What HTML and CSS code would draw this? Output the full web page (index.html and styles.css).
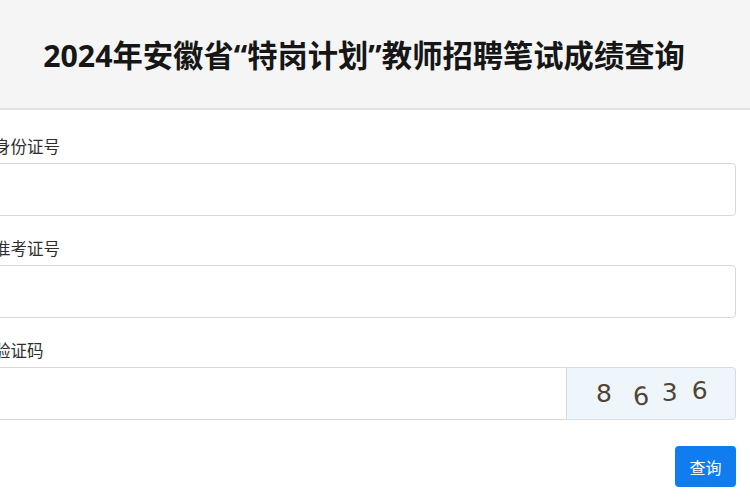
FILE: index.html
```html
<!DOCTYPE html>
<html>
<head>
<meta charset="utf-8">
<link rel="stylesheet" href="styles.css">
</head>
<body>
    <div class="header">
        <h1 class="title">2024年安徽省“特岗计划”教师招聘笔试成绩查询</h1>
    </div>
    <form class="form">
        <div class="field">
            <label class="field-label" for="idcard">身份证号</label>
            <input class="field-input" type="text" id="idcard">
        </div>
        <div class="field">
            <label class="field-label" for="ticket">准考证号</label>
            <input class="field-input" type="text" id="ticket">
        </div>
        <div class="field">
            <label class="field-label" for="code">验证码</label>
            <div class="captcha-row">
                <input class="field-input captcha-input" type="text" id="code">
                <div class="captcha">
                    <span class="digit d1">8</span>
                    <span class="digit d2">6</span>
                    <span class="digit d3">3</span>
                    <span class="digit d4">6</span>
                </div>
            </div>
        </div>
        <div class="actions">
            <button class="btn" type="button">查询</button>
        </div>
    </form>
</body>
</html>
```

FILE: styles.css
```css
body {
    margin: 0;
    background: #fff;
    font-family: "Noto Sans", "Noto Sans CJK SC", sans-serif;
    color: #333;
}
.header {
    height: 108px;
    background: #f5f5f5;
    border-bottom: 2px solid #e2e2e2;
    display: flex;
    align-items: center;
    justify-content: center;
}
.title {
    margin: 0 0 0 -22px;
    font-size: 30.3px;
    font-weight: 700;
    color: #161616;
}
.form {
    margin: 25px 14px 0 -6px;
}
.field {
    margin-bottom: 21px;
}
.field-label {
    display: block;
    font-size: 16.5px;
    line-height: 24px;
    margin-bottom: 4px;
    color: #2e2e2e;
}
.field-input {
    display: block;
    box-sizing: border-box;
    width: 100%;
    height: 53px;
    border: 1px solid #d8d8d8;
    border-radius: 4px;
    background: #fff;
    padding: 0 12px;
    font-size: 16px;
}
.captcha-row {
    display: flex;
}
.captcha-input {
    flex: 1;
    border-radius: 4px 0 0 4px;
}
.captcha {
    width: 169px;
    height: 53px;
    box-sizing: border-box;
    border: 1px solid #dcdcdc;
    border-left: none;
    border-radius: 0 4px 4px 0;
    background: #eef6fb;
    display: flex;
    align-items: center;
    padding-left: 29px;
    font-family: "DejaVu Sans", sans-serif;
    font-size: 25px;
    color: #4f4436;
}
.digit {
    display: inline-block;
}
.d1 { margin-right: 21px; }
.d2 { margin-right: 13px; transform: translateY(3px) rotate(-6deg); }
.d3 { margin-right: 14px; transform: translateY(-1px); }
.d4 { transform: translateY(-3px); }
.actions {
    display: flex;
    justify-content: flex-end;
    margin-top: 26px;
}
.btn {
    width: 61px;
    height: 41px;
    border: none;
    border-radius: 4px;
    background: #0f7cf0;
    color: #fff;
    font-family: "Noto Sans", "Noto Sans CJK SC", sans-serif;
    font-size: 16px;
    cursor: pointer;
}
```
